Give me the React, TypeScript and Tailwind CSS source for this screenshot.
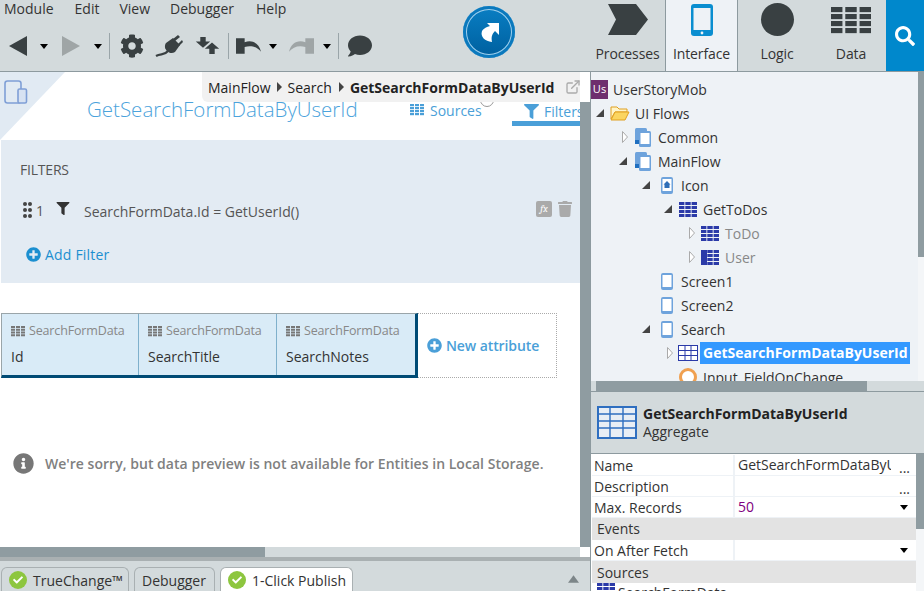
import type { ReactNode } from "react";
import { FaCog, FaComment, FaSearch, FaFilter, FaTrash, FaInfoCircle, FaPlusCircle, FaCheck } from "react-icons/fa";
import { FiExternalLink } from "react-icons/fi";

function Caret({ className = "" }: { className?: string }) {
  return <div className={`w-0 h-0 border-l-[4px] border-r-[4px] border-t-[5px] border-l-transparent border-r-transparent border-t-black ${className}`} />;
}

function Divider({ className = "" }: { className?: string }) {
  return <div className={`w-px h-[26px] bg-[#9aa5a9] ${className}`} />;
}

function TabGrid({ className = "" }: { className?: string }) {
  return (
    <svg viewBox="0 0 14 12" className={className} fill="currentColor" preserveAspectRatio="none">
      {[0, 3, 6, 9].map((y) => [0, 5, 10].map((x) => <rect key={`${x}-${y}`} x={x} y={y} width="4" height="2.2" />))}
    </svg>
  );
}

function TopTab({ label, icon, active, className = "" }: { label: string; icon: ReactNode; active?: boolean; className?: string }) {
  return (
    <div className={`flex flex-col items-center h-full ${active ? "bg-[#eef2f6] border-x border-[#8d9a9f] -mb-px h-[72px]" : ""} ${className}`}>
      <div className="h-[44px] flex items-center justify-center">{icon}</div>
      <span className="text-[14px] leading-[20px] text-[#333] tracking-[-0.1px]">{label}</span>
    </div>
  );
}

function Header() {
  return (
    <div className="flex h-[72px] bg-[#d3dadc] border-b border-[#8d9a9f] shrink-0">
      <div className="w-[463px] flex flex-col">
        <div className="flex gap-[20px] pl-[4px] text-[14px] leading-[18px] text-[#333]">
          <span>Module</span>
          <span className="ml-[1px]">Edit</span>
          <span>View</span>
          <span>Debugger</span>
          <span className="ml-[2px]">Help</span>
        </div>
        <div className="flex items-center h-[20px] mt-[18px] pl-[9px] text-[#394042]">
          <svg viewBox="0 0 18 20" className="w-[18px] h-[20px]"><path d="M18 0V20L0 10Z" fill="#394042" /></svg>
          <Caret className="ml-[13px]" />
          <svg viewBox="0 0 18 20" className="w-[18px] h-[20px] ml-[14px]"><path d="M0 0V20L18 10Z" fill="#9fa5a6" /></svg>
          <Caret className="ml-[14px]" />
          <Divider className="ml-[7px]" />
          <FaCog className="w-[24px] h-[24px] ml-[10px]" />
          <svg viewBox="0 0 28 22" className="w-[28px] h-[22px] ml-[11px]" fill="#394042">
            <path d="M11 8L18 3L25 10L20 17C17 19 14 18 12 16C10 14 9 11 11 8Z" />
            <path d="M18 4L23 0L25 2L20 6ZM23 9L27 5L28 7L24 11Z" />
            <path d="M13 16C9 21 6 18 1 21" fill="none" stroke="#394042" strokeWidth="2.2" />
          </svg>
          <svg viewBox="0 0 26 20" className="w-[25px] h-[18px] ml-[12px]" fill="#394042">
            <path d="M5 0H11V5H16L8 12L0 5H5Z" />
            <path d="M15 19V13H10L18 6L26 13H21V19Z" />
          </svg>
          <Divider className="ml-[8px]" />
          <svg viewBox="0 0 26 18" className="w-[25px] h-[18px] ml-[7px]" fill="#394042"><path d="M0 1L9 1V5C17 2 24 6 26 15C22 10 16 8 9 10V17H0Z" /></svg>
          <Caret className="ml-[8px]" />
          <svg viewBox="0 0 26 18" className="w-[25px] h-[18px] ml-[12px]" fill="#9fa5a6"><path d="M26 1L17 1V5C9 2 2 6 0 15C4 10 10 8 17 10V17H26Z" /></svg>
          <Caret className="ml-[9px]" />
          <Divider className="ml-[7px]" />
          <FaComment className="w-[26px] h-[24px] ml-[8px]" />
        </div>
      </div>
      <div className="w-[52px] h-[52px] mt-[6px] rounded-full bg-linear-to-b from-[#0a7fc4] to-[#005f9e] flex items-center justify-center shadow-[inset_0_0_0_3px_#0b79bd,inset_0_0_0_4px_#9fd0ee]">
        <svg viewBox="0 0 24 24" className="w-[24px] h-[24px]" fill="#fff"><path d="M10 3H22V15L18 11C15 14 14 17 15 22C8 21 3 17 5 11C6 9 8 8 10 7L13 6Z" /></svg>
      </div>
      <div className="flex ml-auto">
        <TopTab
          label="Processes"
          className="w-[75px]"
          icon={<svg viewBox="0 0 40 31" className="w-[40px] h-[31px] mb-[5px]"><path d="M0 0H28L40 15.5L28 31H0L8 15.5Z" fill="#394042" /></svg>}
        />
        <TopTab
          label="Interface"
          active
          className="w-[73px]"
          icon={
            <svg viewBox="0 0 22 32" className="w-[22px] h-[32px] mb-[4px]">
              <rect width="22" height="32" rx="3" fill="#0a8ed0" />
              <rect x="2.5" y="4" width="17" height="22" fill="#eef2f6" />
              <circle cx="11" cy="29" r="1.4" fill="#eef2f6" />
            </svg>
          }
        />
        <TopTab label="Logic" className="w-[78px]" icon={<div className="w-[33px] h-[33px] rounded-full bg-[#394042] mb-[5px]" />} />
        <TopTab label="Data" className="w-[70px]" icon={<TabGrid className="w-[40px] h-[28px] text-[#394042] mb-[3px]" />} />
        <div className="w-[38px] h-[71px] bg-[#0088cc] flex items-center justify-center">
          <FaSearch className="w-[20px] h-[20px] text-white" />
        </div>
      </div>
    </div>
  );
}

function FormHeader() {
  return (
    <div className="relative h-[68px] flex items-start pl-[87px] pt-[23px] shrink-0">
      <div className="absolute left-0 top-0 w-[65px] h-[68px] bg-[#e1eaf3] [clip-path:polygon(0_0,100%_0,0_100%)]" />
      <svg viewBox="0 0 24 24" className="absolute left-[4px] top-[8px] w-[24px] h-[24px]" fill="none" stroke="#7f9fd6" strokeWidth="1.6">
        <rect x="1" y="1" width="16" height="22" rx="2.5" />
        <rect x="14" y="9" width="8.5" height="14" rx="1.5" fill="#d7e2f2" />
      </svg>
      <span className="text-[20.5px] leading-[28px] font-light text-[#4ba3dc] w-[323px] whitespace-nowrap">GetSearchFormDataByUserId</span>
      <div className="relative flex items-center h-[20px] mt-[5px] text-[#4a9fd8] text-[14px]">
        <TabGrid className="w-[14px] h-[12px]" />
        <span className="ml-[6px]">Sources</span>
      </div>
      <div className="absolute left-[480px] top-[21px] w-[14px] h-[14px] rounded-full border border-[#999]" />
      <div className="absolute left-[512px] right-0 bottom-[14px] h-[5px] bg-[#4a9fd8]" />
      <div className="absolute left-[524px] top-[29px] flex items-center text-[#4a9fd8] text-[14px] overflow-hidden w-[56px]">
        <FaFilter className="w-[15px] h-[15px] shrink-0" />
        <span className="ml-[5px]">Filters</span>
      </div>
    </div>
  );
}

function FiltersPanel() {
  return (
    <div className="ml-px h-[143px] bg-[#e3ebf3] pt-[20px] shrink-0 text-[#555]">
      <div className="pl-[19px] text-[14px] leading-[20px] tracking-[-0.2px]">FILTERS</div>
      <div className="flex items-center h-[20px] mt-[20px] pl-[22px] relative">
        <div className="grid grid-cols-2 gap-x-[1px] gap-y-[2px] w-[9px]">
          {[0, 1, 2, 3, 4, 5].map((d) => <div key={d} className="w-[4px] h-[4px] rounded-full bg-[#444]" />)}
        </div>
        <span className="ml-[4px] text-[14px]">1</span>
        <FaFilter className="w-[14px] h-[13px] ml-[12px] text-[#333] mb-[3px]" />
        <span className="ml-[14px] text-[14px] mt-[3px]">SearchFormData.Id = GetUserId()</span>
        <div className="absolute left-[535px] top-[1px] w-[16px] h-[16px] rounded-[2px] bg-[#aaa] text-white text-[10px] italic font-serif flex items-center justify-center">fx</div>
        <FaTrash className="absolute left-[557px] top-[1px] w-[14px] h-[16px] text-[#aaa]" />
      </div>
      <div className="flex items-center h-[20px] mt-[24px] pl-[25px] text-[#1b8fd0] text-[14px] tracking-[0.2px]">
        <FaPlusCircle className="w-[15px] h-[15px] mr-[4px]" />
        Add Filter
      </div>
    </div>
  );
}

function Column({ name, className }: { name: string; className: string }) {
  return (
    <div className={`h-full pt-[9px] ${className}`}>
      <div className="flex items-center text-[#888] text-[12.5px] leading-[16px] tracking-[-0.15px]">
        <TabGrid className="w-[14px] h-[11px] mr-[4px] text-[#777]" />
        SearchFormData
      </div>
      <div className="text-[14px] leading-[20px] mt-[8px] text-[#333]">{name}</div>
    </div>
  );
}

function DataTable() {
  return (
    <div className="flex mt-[30px] h-[65px] ml-px shrink-0">
      <div className="flex bg-[#d9ebf7] border-t border-l border-[#9aa5a9] border-b-[3px] border-b-[#004b75] border-r-[3px] border-r-[#004b75] w-[417px]">
        <Column name="Id" className="w-[137px] pl-[9px] border-r border-[#7fb0cc]" />
        <Column name="SearchTitle" className="w-[138px] pl-[9px] border-r border-[#7fb0cc]" />
        <Column name="SearchNotes" className="w-[138px] pl-[9px]" />
      </div>
      <div className="w-[139px] flex items-center pl-[9px] border border-l-0 border-dotted border-[#aaa] text-[#4a9fd8] text-[14px] font-semibold tracking-[-0.1px]">
        <FaPlusCircle className="w-[15px] h-[15px] mr-[4px] shrink-0" />
        New attribute
      </div>
    </div>
  );
}

function BottomTab({ label, check, active, className = "" }: { label: string; check?: boolean; active?: boolean; className?: string }) {
  return (
    <div className={`h-[24px] flex items-center justify-start pl-[7px] rounded-t-md border border-b-0 border-[#a9b0b2] text-[14px] text-[#333] ${active ? "bg-white" : "bg-[#d3dadc]"} ${className}`}>
      {check && (
        <div className="w-[18px] h-[18px] rounded-full bg-[#8dc63f] flex items-center justify-center mr-[6px] shrink-0">
          <FaCheck className="w-[10px] h-[10px] text-white" />
        </div>
      )}
      <span className="mt-[1px] whitespace-nowrap">{label}</span>
    </div>
  );
}

function LeftPanel() {
  return (
    <div className="relative w-[590px] flex flex-col shrink-0 h-full">
      <div className="flex flex-1 min-h-0">
        <div className="w-[580px] flex flex-col bg-white overflow-hidden">
          <FormHeader />
          <FiltersPanel />
          <DataTable />
          <div className="flex items-center mt-[75px] pl-[13px] text-[#808080] text-[14px] font-semibold whitespace-nowrap tracking-[0.03px]">
            <FaInfoCircle className="w-[21px] h-[21px] mr-[11px] text-[#777] shrink-0" />
            We're sorry, but data preview is not available for Entities in Local Storage.
          </div>
        </div>
        <div className="w-[10px] bg-[#8f9ca1] mt-[30px]" />
      </div>
      <div className="h-[10px] w-[580px] bg-[#d3dadc] shrink-0">
        <div className="h-full w-[265px] bg-[#8f9ca1]" />
      </div>
      <div className="h-[34px] bg-[#d3dadc] border-t-[4px] border-[#a9b0b2] flex items-end pl-px gap-[5px] relative shrink-0">
        <BottomTab label="TrueChange™" check className="w-[128px]" />
        <BottomTab label="Debugger" className="w-[81px]" />
        <BottomTab label="1-Click Publish" check active className="w-[133px]" />
        <svg viewBox="0 0 12 8" className="absolute left-[568px] top-[14px] w-[11px] h-[8px]"><path d="M0 8L6 0L12 8Z" fill="#7d8689" /></svg>
      </div>
      <div className="absolute left-[202px] top-0 right-[10px] h-[30px] bg-[#f1f1f1] rounded-bl-md flex items-center pl-[6px] text-[14px] text-[#222]">
        <span>MainFlow</span>
        <span className="w-0 h-0 mx-[6px] border-y-[5px] border-l-[5px] border-y-transparent border-l-[#444]" />
        <span>Search</span>
        <span className="w-0 h-0 ml-[7px] mr-[6px] border-y-[5px] border-l-[5px] border-y-transparent border-l-[#444]" />
        <span className="font-bold">GetSearchFormDataByUserId</span>
        <FiExternalLink className="w-[16px] h-[16px] ml-[11px] text-[#aaa] shrink-0" />
      </div>
    </div>
  );
}

function Open() {
  return <div className="w-0 h-0 border-b-[8px] border-l-[8px] border-l-transparent border-b-[#444]" />;
}

function Closed() {
  return <div className="w-[6px] h-[12px]"><svg viewBox="0 0 6 12" className="w-[6px] h-[12px]"><path d="M.5 .5L5.5 6L.5 11.5Z" fill="#fff" stroke="#aaa" /></svg></div>;
}

function Phone({ children }: { children?: ReactNode }) {
  return (
    <svg viewBox="0 0 12 17" className="w-[12px] h-[17px]">
      <rect width="12" height="17" rx="2" fill="#6ea3dc" />
      <rect x="1.5" y="2" width="9" height="12" fill="#fff" />
      {children}
    </svg>
  );
}

function Flow() {
  return (
    <svg viewBox="0 0 16 19" className="w-[16px] h-[19px]">
      <rect x="0" y="0" width="12" height="16" rx="1.5" fill="#6ea3dc" />
      <rect x="4" y="3" width="12" height="16" rx="1.5" fill="#6ea3dc" />
      <rect x="5.5" y="5" width="9" height="11" fill="#fff" />
      <rect x="0" y="12" width="4" height="4" fill="#1f6fc0" />
    </svg>
  );
}

function Entity({ bar }: { bar?: boolean }) {
  return (
    <svg viewBox="0 0 18 15" className="w-[18px] h-[15px] shrink-0" fill="#2b3aa8">
      {[0, 4, 8, 12].map((y) => [0, 6.3, 12.6].map((x) => <rect key={`${x}-${y}`} x={x} y={y} width="5.4" height="3" />))}
      {bar && <rect x="0" y="0" width="6" height="15" />}
    </svg>
  );
}

function TreeRow({ pad, arrow, icon, label, gap, muted }: { pad: string; arrow?: ReactNode; icon: ReactNode; label: string; gap: string; muted?: boolean }) {
  return (
    <div className={`flex items-center h-[24px] shrink-0 ${pad}`}>
      <div className="w-[14px] flex justify-start shrink-0">{arrow}</div>
      {icon}
      <span className={`${gap} whitespace-nowrap ${muted ? "text-[#888]" : "text-[#333]"}`}>{label}</span>
    </div>
  );
}

function Tree() {
  return (
    <div className="h-[309px] flex shrink-0">
      <div className="w-[327px] flex flex-col overflow-hidden pt-[5px] text-[14px]">
        <div className="flex items-center h-[24px] shrink-0">
          <div className="w-[17px] h-[19px] bg-[#6e2f6e] text-white text-[11px] flex items-center justify-center">Us</div>
          <span className="ml-[5px] text-[#333]">UserStoryMob</span>
        </div>
        <TreeRow
          pad="pl-[5px]"
          arrow={<Open />}
          gap="ml-[5px]"
          label="UI Flows"
          icon={
            <svg viewBox="0 0 20 16" className="w-[20px] h-[16px]">
              <path d="M1 2H7L9 4H17V7H5L1 14Z" fill="#fff4c8" stroke="#e0a020" />
              <path d="M1 15L5 7H19L15 15Z" fill="#fbd560" stroke="#e0a020" />
            </svg>
          }
        />
        <TreeRow pad="pl-[30px]" arrow={<div className="ml-[1px]"><Closed /></div>} gap="ml-[7px]" label="Common" icon={<Flow />} />
        <TreeRow pad="pl-[30px]" arrow={<div className="-ml-[2px]"><Open /></div>} gap="ml-[7px]" label="MainFlow" icon={<Flow />} />
        <TreeRow
          pad="pl-[51px]"
          arrow={<Open />}
          gap="ml-[8px]"
          label="Icon"
          icon={<div className="ml-[5px]"><Phone><path d="M6 4L9.5 7.5H8.5V11H3.5V7.5H2.5Z" fill="#2f6fb8" /></Phone></div>}
        />
        <TreeRow pad="pl-[73px]" arrow={<Open />} gap="ml-[6px]" label="GetToDos" icon={<div className="ml-[1px]"><Entity /></div>} />
        <TreeRow pad="pl-[98px]" arrow={<Closed />} gap="ml-[6px]" muted label="ToDo" icon={<div className="-ml-[2px]"><Entity /></div>} />
        <TreeRow pad="pl-[98px]" arrow={<Closed />} gap="ml-[6px]" muted label="User" icon={<div className="-ml-[2px]"><Entity bar /></div>} />
        <TreeRow pad="pl-[56px]" gap="ml-[8px]" label="Screen1" icon={<Phone />} />
        <TreeRow pad="pl-[56px]" gap="ml-[8px]" label="Screen2" icon={<Phone />} />
        <TreeRow pad="pl-[51px]" arrow={<Open />} gap="ml-[8px]" label="Search" icon={<div className="ml-[5px]"><Phone /></div>} />
        <div className="flex items-center h-[24px] pl-[76px] shrink-0">
          <Closed />
          <svg viewBox="0 0 20 16" className="w-[20px] h-[16px] ml-[5px]">
            <rect x=".5" y=".5" width="19" height="15" fill="#fff" stroke="#2b3aa8" />
            <path d="M.5 5.5H19.5M.5 10.5H19.5M7 .5V15.5M13 .5V15.5" stroke="#2b3aa8" />
          </svg>
          <span className="ml-[2px] bg-[#3399ff] text-white font-bold pl-[3px] w-[210px] h-[22px] leading-[22px] whitespace-nowrap">GetSearchFormDataByUserId</span>
        </div>
        <div className="flex items-center h-[24px] pl-[88px] shrink-0">
          <div className="w-[18px] h-[18px] rounded-full border-[3px] border-[#f0a050] bg-white" />
          <span className="ml-[6px] text-[#333]">Input_FieldOnChange</span>
        </div>
      </div>
      <div className="w-[6px] bg-[#f4f6f8] ml-px">
        <div className="h-[185px] bg-[#8f9ca1]" />
      </div>
    </div>
  );
}

function PropRow({ name, value, more, drop, valueClass = "" }: { name: string; value?: string; more?: boolean; drop?: boolean; valueClass?: string }) {
  return (
    <div className="flex h-[21px] bg-white border-b border-[#eef2f6] shrink-0 text-[14px] leading-[22px]">
      <div className="w-[143px] pl-[2px] border-r-2 border-[#eef2f6] text-[#333] whitespace-nowrap">{name}</div>
      <div className={`flex-1 min-w-0 flex items-center pl-[3px] pr-[6px] text-[#333] ${valueClass}`}>
        <span className="w-[153px] overflow-hidden whitespace-nowrap">{value}</span>
        {more && <span className="ml-auto leading-[14px] mt-[5px]">...</span>}
        {drop && <Caret className="ml-auto mr-[2px]" />}
      </div>
    </div>
  );
}

function PropSection({ label, lead }: { label: string; lead: string }) {
  return <div className={`h-[22px] bg-[#e3e3e3] pl-[5px] text-[14px] text-[#333] shrink-0 ${lead}`}>{label}</div>;
}

function RightPanel() {
  return (
    <div className="flex-1 flex flex-col bg-[#eef2f6] border-l border-[#8d9a9f] h-full min-w-0">
      <Tree />
      <div className="h-[10px] bg-[#d3dadc] shrink-0 pl-[5px] pr-[57px]">
        <div className="h-full bg-[#8f9ca1]" />
      </div>
      <div className="h-[63px] bg-[#d3dadc] border-y border-[#8d9a9f] flex items-center pl-[6px] shrink-0">
        <svg viewBox="0 0 40 33" className="w-[40px] h-[33px]">
          <rect x="1" y="1" width="38" height="31" fill="#e8eef5" stroke="#2f6fc0" strokeWidth="2" />
          <path d="M1 8H39M1 15H39M1 22H39M13 1V32M26 1V32" stroke="#2f6fc0" strokeWidth="1.4" />
        </svg>
        <div className="ml-[6px] text-[14px] leading-[18px] text-[#222]">
          <div className="font-bold">GetSearchFormDataByUserId</div>
          <div className="text-[#333]">Aggregate</div>
        </div>
      </div>
      <div className="flex flex-1 min-h-0 overflow-hidden">
        <div className="w-[325px] pl-[1px] pt-[1px] flex flex-col bg-white">
          <PropRow name="Name" value="GetSearchFormDataByUserId" more />
          <PropRow name="Description" more />
          <PropRow name="Max. Records" value="50" drop valueClass="text-[#800080]" />
          <PropSection label="Events" lead="leading-[22px]" />
          <PropRow name="On After Fetch" drop />
          <PropSection label="Sources" lead="leading-[24px]" />
          <div className="flex items-start h-[10px] pl-[5px] bg-white text-[14px] leading-[20px] text-[#333] overflow-hidden">
            <Entity />
            <span className="ml-[3px]">SearchFormData</span>
          </div>
        </div>
        <div className="flex-1 bg-[#f4f6f8]">
          <div className="h-[75px] bg-[#8f9ca1]" />
        </div>
      </div>
    </div>
  );
}

export default function App() {
  return (
    <div className="w-[924px] h-[591px] overflow-hidden flex flex-col bg-white font-['Open_Sans',sans-serif]">
      <Header />
      <div className="flex h-[519px] min-h-0">
        <LeftPanel />
        <RightPanel />
      </div>
    </div>
  );
}
